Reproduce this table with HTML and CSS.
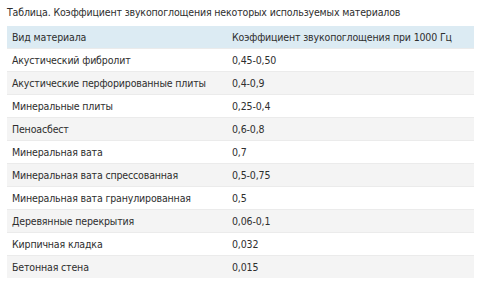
FILE: index.html
```html
<!DOCTYPE html>
<html lang="ru">
<head>
<meta charset="utf-8">
<link rel="stylesheet" href="styles.css">
</head>
<body>
<div class="wrap">
  <p class="caption">Таблица. Коэффициент звукопоглощения некоторых используемых материалов</p>
  <table class="tbl">
    <thead>
      <tr><th class="c1">Вид материала</th><th>Коэффициент звукопоглощения при 1000 Гц</th></tr>
    </thead>
    <tbody>
      <tr><td>Акустический фибролит</td><td>0,45-0,50</td></tr>
      <tr><td>Акустические перфорированные плиты</td><td>0,4-0,9</td></tr>
      <tr><td>Минеральные плиты</td><td>0,25-0,4</td></tr>
      <tr><td>Пеноасбест</td><td>0,6-0,8</td></tr>
      <tr><td>Минеральная вата</td><td>0,7</td></tr>
      <tr><td>Минеральная вата спрессованная</td><td>0,5-0,75</td></tr>
      <tr><td>Минеральная вата гранулированная</td><td>0,5</td></tr>
      <tr><td>Деревянные перекрытия</td><td>0,06-0,1</td></tr>
      <tr><td>Кирпичная кладка</td><td>0,032</td></tr>
      <tr><td>Бетонная стена</td><td>0,015</td></tr>
    </tbody>
  </table>
</div>
</body>
</html>
```
FILE: styles.css
```css
html, body {
  margin: 0;
  padding: 0;
  background: #ffffff;
}
.wrap {
  padding: 5px 6px 0 7px;
  font-family: "DejaVu Sans Condensed", "DejaVu Sans", Verdana, sans-serif;
  font-stretch: condensed;
  font-size: 10.5px;
  letter-spacing: -0.15px;
  color: #2e2e2e;
}
.caption {
  margin: 0 0 7px 0;
  line-height: 14px;
}
.tbl {
  width: 467px;
  border-collapse: collapse;
}
.tbl th, .tbl td {
  text-align: left;
  font-weight: normal;
  height: 22px;
  padding: 0 5px;
  line-height: 14px;
  white-space: nowrap;
  border-top: 1px solid #ebebeb;
}
.tbl th {
  background: #dcebf3;
  border-top: none;
  height: 22px;
}
.tbl .c1 {
  width: 210px;
}
.tbl tbody tr:nth-child(even) td {
  background: #f4f4f4;
}
```
